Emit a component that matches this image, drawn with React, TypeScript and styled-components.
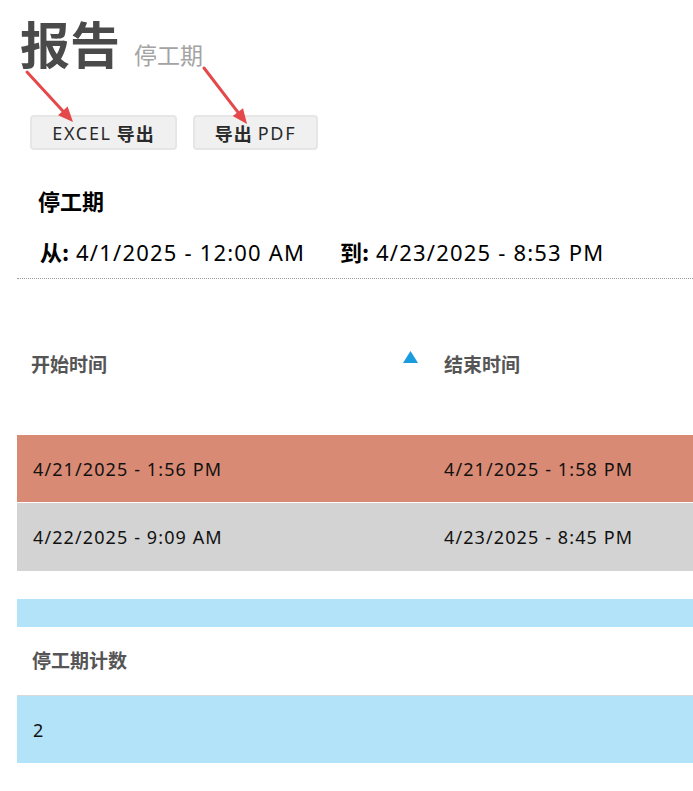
import React from "react";
import styled, { createGlobalStyle } from "styled-components";

const GlobalStyle = createGlobalStyle`
  html, body {
    margin: 0;
    padding: 0;
    background: #ffffff;
    overflow: hidden;
  }
  body {
    font-family: "Noto Sans", "Noto Sans CJK SC", sans-serif;
    color: #000;
  }
`;

const Page = styled.div`
  position: relative;
  width: 693px;
  height: 791px;
  padding: 12px 0 0 17px;
  box-sizing: border-box;
`;

const TitleRow = styled.div`
  display: flex;
  align-items: baseline;
  gap: 14px;
  padding-left: 3px;
  height: 60px;
  line-height: 60px;
`;

const Title = styled.h1`
  margin: 0;
  font-size: 50px;
  font-weight: 700;
  color: #4a4a4a;
  font-family: "Noto Sans CJK SC", sans-serif;
`;

const Subtitle = styled.span`
  font-size: 23px;
  font-weight: 400;
  color: #a3a3a3;
  font-family: "Noto Sans CJK SC", sans-serif;
`;

const Arrows = styled.svg`
  position: absolute;
  left: 0;
  top: 0;
  pointer-events: none;
`;

const ButtonRow = styled.div`
  display: flex;
  gap: 16px;
  margin-top: 43px;
  padding-left: 13px;
`;

const ExportButton = styled.button<{ $w: number }>`
  width: ${(p) => p.$w}px;
  height: 35px;
  background: #f0f0f0;
  border: 2px solid #e6e6e6;
  border-radius: 4px;
  font-family: "Noto Sans", "Noto Sans CJK SC", sans-serif;
  font-size: 18px;
  color: #2a2a2a;
  letter-spacing: 1.7px;
  padding: 1px 0 0 0;
  display: flex;
  align-items: center;
  justify-content: center;
  gap: 5px;
`;

const Latin = styled.span`
  font-weight: 400;
`;

const Cjk = styled.span`
  font-family: "Noto Sans CJK SC", sans-serif;
  font-weight: 700;
  letter-spacing: 1px;
`;

const SectionTitle = styled.h2`
  margin: 35px 0 0 0;
  padding-left: 21px;
  font-size: 22px;
  line-height: 30px;
  font-weight: 700;
  font-family: "Noto Sans CJK SC", sans-serif;
  color: #000;
`;

const DateLine = styled.div`
  margin-top: 21px;
  padding: 0 0 11px 23px;
  display: flex;
  font-size: 22px;
  line-height: 30px;
  border-bottom: 1px dotted #9a9a9a;
`;

const DateItem = styled.span<{ $w?: number }>`
  ${(p) => (p.$w ? `width: ${p.$w}px;` : "")}
  white-space: nowrap;
  letter-spacing: 1.2px;
`;

const DateLabel = styled.b`
  font-family: "Noto Sans CJK SC", sans-serif;
  font-weight: 700;
  letter-spacing: 0;
`;

const Table = styled.div`
  margin-top: 69px;
  display: flex;
  flex-direction: column;
`;

const HeaderRow = styled.div`
  display: grid;
  grid-template-columns: 411px 1fr;
  height: 87px;
`;

const HeaderCell = styled.div<{ $pl: number }>`
  position: relative;
  padding: 3px 0 0 ${(p) => p.$pl}px;
  font-family: "Noto Sans CJK SC", sans-serif;
  font-weight: 700;
  font-size: 19px;
  line-height: 26px;
  color: #555555;
`;

const SortIcon = styled.svg`
  position: absolute;
  right: 10px;
  top: 3px;
`;

const Row = styled.div<{ $bg: string; $h?: number }>`
  display: grid;
  grid-template-columns: 411px 1fr;
  align-items: center;
  height: ${(p) => p.$h ?? 67}px;
  background: ${(p) => p.$bg};
  font-size: 18px;
  letter-spacing: 1.1px;
  color: #111;
`;

const Cell = styled.div<{ $pl: number }>`
  padding-left: ${(p) => p.$pl}px;
  white-space: nowrap;
`;

const Gap = styled.div<{ $h: number }>`
  height: ${(p) => p.$h}px;
`;

const Band = styled.div`
  height: 28px;
  background: #b3e3f9;
`;

const CountHeader = styled.div`
  height: 69px;
  padding: 20px 0 0 15px;
  box-sizing: border-box;
  font-family: "Noto Sans CJK SC", sans-serif;
  font-weight: 700;
  font-size: 19px;
  line-height: 26px;
  color: #555555;
  border-bottom: 1px solid #d9d9d9;
`;

const CountRow = styled.div`
  height: 67px;
  background: #b3e3f9;
  display: flex;
  align-items: center;
  padding-left: 16px;
  font-size: 18px;
  color: #111;
`;

const RED = "#e5484b";

function Arrow({ x1, y1, x2, y2 }: { x1: number; y1: number; x2: number; y2: number }) {
  const ang = Math.atan2(y2 - y1, x2 - x1);
  const len = 15;
  const half = 6.5;
  const bx = x2 - len * Math.cos(ang);
  const by = y2 - len * Math.sin(ang);
  const px = -Math.sin(ang) * half;
  const py = Math.cos(ang) * half;
  return (
    <g>
      <line x1={x1} y1={y1} x2={bx} y2={by} stroke={RED} strokeWidth={3} strokeLinecap="round" />
      <polygon points={`${x2},${y2} ${bx + px},${by + py} ${bx - px},${by - py}`} fill={RED} />
    </g>
  );
}

export default function App() {
  return (
    <>
      <GlobalStyle />
      <Page>
        <TitleRow>
          <Title>报告</Title>
          <Subtitle>停工期</Subtitle>
        </TitleRow>
        <ButtonRow>
          <ExportButton $w={147}>
            <Latin>EXCEL</Latin>
            <Cjk>导出</Cjk>
          </ExportButton>
          <ExportButton $w={125}>
            <Cjk>导出</Cjk>
            <Latin>PDF</Latin>
          </ExportButton>
        </ButtonRow>
        <SectionTitle>停工期</SectionTitle>
        <DateLine>
          <DateItem $w={300}>
            <DateLabel>从:</DateLabel> 4/1/2025 - 12:00 AM
          </DateItem>
          <DateItem>
            <DateLabel>到:</DateLabel> 4/23/2025 - 8:53 PM
          </DateItem>
        </DateLine>
        <Table>
          <HeaderRow>
            <HeaderCell $pl={14}>
              开始时间
              <SortIcon width="15" height="12" viewBox="0 0 15 12">
                <polygon points="7.5,0 15,12 0,12" fill="#1a9be0" />
              </SortIcon>
            </HeaderCell>
            <HeaderCell $pl={16}>结束时间</HeaderCell>
          </HeaderRow>
          <Row $bg="#d98a74">
            <Cell $pl={16}>4/21/2025 - 1:56 PM</Cell>
            <Cell $pl={16}>4/21/2025 - 1:58 PM</Cell>
          </Row>
          <Gap $h={1} />
          <Row $bg="#d3d3d3" $h={68}>
            <Cell $pl={16}>4/22/2025 - 9:09 AM</Cell>
            <Cell $pl={16}>4/23/2025 - 8:45 PM</Cell>
          </Row>
          <Gap $h={28} />
          <Band />
          <CountHeader>停工期计数</CountHeader>
          <CountRow>2</CountRow>
        </Table>
        <Arrows width="300" height="140" viewBox="0 0 300 140">
          <Arrow x1={27} y1={72} x2={73} y2={122} />
          <Arrow x1={204} y1={68} x2={247} y2={124} />
        </Arrows>
      </Page>
    </>
  );
}
